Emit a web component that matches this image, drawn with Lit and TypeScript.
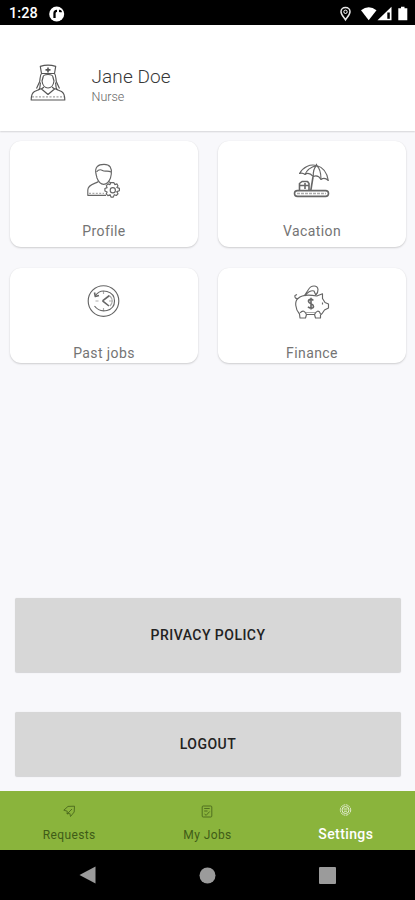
import { LitElement, html, css, svg } from "lit";
import { customElement, property } from "lit/decorators.js";

const icons: Record<string, unknown> = {
  nurse: svg`<svg class="line" width="36" height="38" viewBox="0 0 36 38">
    <path d="M10.300 2.400Q18 0 25.700 2.400L24.500 9.500H11.500Z"/><path class="heavy" d="M18 3.400v5M15.500 5.900h5"/>
    <path d="M11.500 9.500C9.500 12 10.500 15 9.500 18L6.500 24.500M24.500 9.500C26.500 12 25.500 15 26.500 18L29.500 24.500"/>
    <path d="M13 13.500C13 9.500 23 9.500 23 13.500L24 17C23.500 21 21 24 18 24S12.500 21 12 17Z"/>
    <path d="M10.500 18.500C9.500 22 11 24 8.500 26M25.500 18.500C26.500 22 25 24 27.500 26M14 23L11.500 25L18 30.500L24.500 25L22 23"/>
    <path d="M11.500 24.500L4.500 27.500C1.800 29 1.200 32 1.200 36H34.800C34.800 32 34.200 29 31.500 27.500L24.500 24.500"/>
    <path class="faint" d="M2 32.800H34" stroke-dasharray="2 1.500"/></svg>`,
  profile: svg`<svg class="line" width="36" height="36" viewBox="0 0 36 36">
    <path d="M10 11C8.500 4 12 1.300 18 1.300S26 5 25.300 11L24.500 15C22.500 20 20 21.300 17.700 21.300S12.500 19 11 15Z"/>
    <path d="M10.500 9C12 7 14 6 16.500 7.500S22 7 25 9"/>
    <path d="M12.500 18.500C9 21 2 21 1.800 27V32.300H20M22.500 18.500L25 20"/>
    <path class="faint" d="M3 30.300H18" stroke-dasharray="2 1.400"/>
    <path d="M27.800 19.600l1 2 2.200-.7 1 2.100-1.200 1.400 2.600 1v2.400l-2.600.8 1.200 2.200-1.700 1.700-2-.8-1 2.400h-2.300l-.9-2.400-2.200.9-1.700-1.700.9-2-2.200-1v-2.400l2.200-.9-.8-2 1.700-1.700 2 .7.900-2z"/>
    <circle cx="26.800" cy="27.200" r="2.600"/></svg>`,
  vacation: svg`<svg class="line" width="38" height="36" viewBox="0 0 38 36">
    <path d="M6.500 10.500C10 4 17 .8 23.500 2.500S34 9.500 35.300 17.500C32.500 14.800 30.500 14.600 28 16.500C26 13 23.300 12.300 20.300 13.500C17.500 10.500 14.500 9.500 12 11.500C10 9.800 8.500 9.700 6.500 10.500Z"/>
    <path d="M23.500 .8V2.500C18 4 14 6.500 12 11.500M23.500 2.500C21 5 20 9 20.300 13.500M23.500 2.500C27 5 28 10 28 16.500"/>
    <path class="heavy" d="M20 14L17.800 27.500"/>
    <path class="heavy" d="M6.500 27V20.500L9 18.500H14.500L16 20.500V27M6.500 22.500H16M12 20V26"/>
    <rect class="heavy" x="1.500" y="27.600" width="34" height="5.800" rx="2.900"/>
    <path class="heavy faint" d="M4 30.500H33" stroke-dasharray="3 1"/></svg>`,
  history: svg`<svg class="line" width="34" height="34" viewBox="0 0 34 34">
    <circle cx="16.500" cy="17" r="15.300"/>
    <path d="M8.500 11.500C14 3.500 27.500 7 27.500 17S14 30.500 7.500 22"/>
    <path class="heavy" d="M7.500 8.500L8.300 12.500L12 11.500"/>
    <path class="heavy" d="M15.500 16.800L22.500 11.500M15.500 16.800L22 22"/>
    <path class="faint" d="M16.500 7V10M16.500 24V27M8.500 17H11.500M22 17H26M23 12C26 15 26 19 23 22"/></svg>`,
  finance: svg`<svg class="line" width="38" height="36" viewBox="0 0 38 36">
    <path d="M11.500 11.500L15.500 5.500C18 1 24.500 .8 25 5.500C25.200 8 24 10 22.500 11.500M12 12C14 8.500 18 6 21 7L23 11.500"/>
    <path d="M23.800 12L29.500 9.800V14.500L32 18.500L35.500 20V24L31.500 26C30 28.500 29 30 27.500 31V34H22.500L21.500 30.500H13.500L12.500 34H7L6.500 30C2 25 1.500 17 5 14.500C9 10.500 16 10.500 23.800 12Z"/>
    <path d="M5 14.500C2.500 15 1.500 13.500 2 11.500L4 10.500M29.500 18.500V20.500M7 29C10 25.500 12 27.500 13.500 30.500M21.500 30.500C23 27 26 25.500 27.500 30"/>
    <path class="faint" d="M13 28.500H22"/>
    <path class="heavy" d="M20.300 16.400C19 14.700 15.300 15 15.500 17.500S20.500 19.500 20.500 22.200S16.500 24.700 15 22.800M18 13.800V25.500"/></svg>`,
  requests: svg`<svg class="line" width="13" height="13" viewBox="0 0 13 13">
    <path d="M.8 5.200L5 1.400L11.500 1.200L11.200 7L7.500 11.500L6.800 8.300L4 9L4.300 6.200Z M4 9L9 4"/></svg>`,
  jobs: svg`<svg class="line" width="12" height="13" viewBox="0 0 12 13">
    <rect x="1.200" y="1" width="9.600" height="11" rx="1"/><path d="M3.200 3.500H8.700M3.200 6H6.500M3.500 9L5.200 10.300L8.700 6.500"/></svg>`,
  settings: svg`<svg class="line" width="13" height="14" viewBox="0 0 13 14">
    <circle cx="6.500" cy="7" r="5.200" stroke-dasharray="2 .7"/><circle cx="6.500" cy="7" r="3.500"/><path d="M4.500 6H8.500M5 8.200H8"/></svg>`,
};

const iconStyles = css`
  svg { display: block; flex: none; }
  .line { fill: none; stroke: currentColor; stroke-width: 1.15; stroke-linejoin: round; stroke-linecap: butt; }
  .heavy { stroke-width: 1.6; }
  .faint { opacity: 0.55; }
`;

@customElement("menu-card")
class MenuCard extends LitElement {
  @property() label = "";
  @property() icon = "";
  static styles = [iconStyles, css`
    :host {
      display: flex; flex-direction: column; align-items: center; justify-content: space-between;
      box-sizing: border-box; overflow: hidden; border-radius: 11px; background: #fff; color: #666;
      box-shadow: 0 1px 2px rgba(0, 0, 0, 0.17), 0 0 1px rgba(0, 0, 0, 0.08);
    }
    .label { font-size: 14px; line-height: 18px; letter-spacing: 0.4px; color: #747474; }
  `];
  render() {
    return html`${icons[this.icon]}<div class="label">${this.label}</div>`;
  }
}

@customElement("nav-tab")
class NavTab extends LitElement {
  @property() label = "";
  @property() icon = "";
  @property({ type: Boolean, reflect: true }) active = false;
  static styles = [iconStyles, css`
    :host { display: flex; flex: 1; flex-direction: column; align-items: center; padding-top: 14px; color: #3f5c17; }
    :host([active]) { padding-top: 12px; color: #fff; }
    .line { stroke-width: 0.9; opacity: 0.85; }
    .label { margin-top: 9px; font-size: 12px; line-height: 16px; letter-spacing: 0.4px; }
    :host([active]) .label { margin-top: 8px; font-size: 14px; line-height: 18px; font-weight: 500; letter-spacing: 0.4px; }
  `];
  render() {
    return html`${icons[this.icon]}<div class="label">${this.label}</div>`;
  }
}

@customElement("app-root")
class AppRoot extends LitElement {
  static styles = [iconStyles, css`
    :host {
      display: flex; flex-direction: column; width: 415px; height: 900px; overflow: hidden;
      background: #f8f8fb; font-family: Roboto, "Liberation Sans", sans-serif;
    }
    .status { display: flex; align-items: center; flex: none; height: 25px; box-sizing: border-box; padding: 2px 7px 0 9px; background: #000; color: #fff; }
    .time { width: 40px; padding-top: 1px; font-size: 14.500px; line-height: 18px; font-weight: 500; letter-spacing: 0.1px; }
    .space { flex: 1; }
    .header { display: flex; flex: none; height: 106px; box-sizing: border-box; padding: 38.500px 0 0 30px; background: #fff; color: #555; box-shadow: 0 1px 1.500px rgba(0, 0, 0, 0.14); }
    .who { margin: 1px 0 0 25.500px; }
    .name { font-size: 19px; line-height: 24px; font-weight: 300; color: #383838; letter-spacing: 0.1px; }
    .role { font-size: 12.500px; line-height: 16px; font-weight: 300; color: #666; }
    .cards { display: grid; flex: none; grid-template-columns: 188px 188px; grid-template-rows: 106px 95px; gap: 21px 20px; padding: 10px 0 0 10px; }
    .upper { padding: 22px 0 7px; }
    .lower { padding: 16px 0 1px; }
    .actions { display: flex; flex-direction: column; flex: 1; justify-content: flex-end; gap: 40px; padding: 0 14px 15.500px 15px; }
    .action { height: 64px; border: 0; padding: 0; border-radius: 2px; background: #d7d7d7; box-shadow: 0 0.500px 1px rgba(0, 0, 0, 0.15); color: #222; font: 500 14px/20px Roboto, "Liberation Sans", sans-serif; letter-spacing: 0.47px; }
    .policy { height: 73.500px; }
    .tabs { display: flex; flex: none; height: 59px; background: #8ab43c; }
    .system { display: flex; flex: none; align-items: center; justify-content: space-between; height: 50px; box-sizing: border-box; padding: 0 79px 0 79px; background: #000; }
  `];
  render() {
    return html`
      <div class="status">
        <div class="time">1:28</div>
        <svg width="16" height="16" viewBox="0 0 16 16"><circle cx="7.700" cy="8" r="7.500" fill="#fff"/><path d="M5.500 12V7.300Q5.500 4.800 8 4.800M10 4.800h.5q1.300 0 1.300 1.500" fill="none" stroke="#000" stroke-width="2.300"/></svg>
        <div class="space"></div>
        <svg width="69" height="16" viewBox="0 0 69 16">
          <path d="M6.500 1.500C3.700 1.500 2 3.500 2 5.700C2 8.500 4.700 11 6.500 13.800C8.300 11 11 8.500 11 5.700C11 3.500 9.300 1.500 6.500 1.500Z" fill="none" stroke="#e8e8e8" stroke-width="1.500"/><circle cx="6.500" cy="5.800" r="1.700" fill="none" stroke="#fff"/>
          <path d="M22 4.200Q29.700-1.600 37.500 4.200L29.700 14.300Z" fill="#fff"/>
          <path d="M38.500 14.300L52.500.7V14.300Z" fill="#fff"/><path d="M48.300 6.500H50.800V12.800H48.300Z" fill="#000"/>
          <path d="M59.300 2.200H62V.7H65.500V2.200H68.300V14.300H59.300Z" fill="#fff"/>
        </svg>
      </div>
      <header class="header">${icons.nurse}
        <div class="who"><div class="name">Jane Doe</div><div class="role">Nurse</div></div>
      </header>
      <main class="cards">
        <menu-card class="upper" label="Profile" icon="profile"></menu-card>
        <menu-card class="upper" label="Vacation" icon="vacation"></menu-card>
        <menu-card class="lower" label="Past jobs" icon="history"></menu-card>
        <menu-card class="lower" label="Finance" icon="finance"></menu-card>
      </main>
      <div class="actions">
        <button class="action policy">PRIVACY POLICY</button>
        <button class="action">LOGOUT</button>
      </div>
      <nav class="tabs">
        <nav-tab label="Requests" icon="requests"></nav-tab>
        <nav-tab label="My Jobs" icon="jobs"></nav-tab>
        <nav-tab label="Settings" icon="settings" active></nav-tab>
      </nav>
      <div class="system">
        <svg width="17" height="18" viewBox="0 0 17 18"><path d="M.5 9L16.500.5V17.500Z" fill="#9b9b9b"/></svg>
        <svg width="17" height="17" viewBox="0 0 17 17"><circle cx="8.500" cy="8.500" r="8" fill="#9b9b9b"/></svg>
        <svg width="17" height="17" viewBox="0 0 17 17"><rect width="17" height="17" rx="1" fill="#9b9b9b"/></svg>
      </div>`;
  }
}
